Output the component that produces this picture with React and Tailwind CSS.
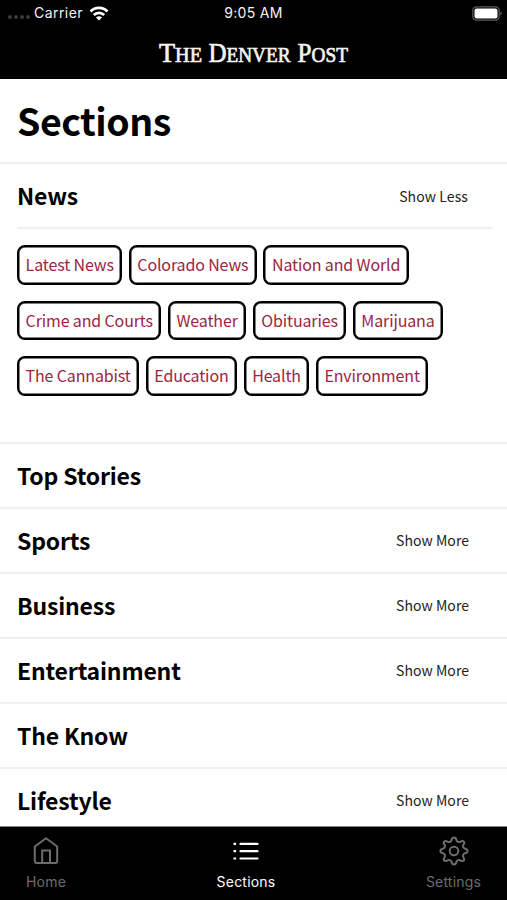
import React, { useState } from 'react';

const TOPICS = [
  ['Latest News', 'Colorado News', 'Nation and World'],
  ['Crime and Courts', 'Weather', 'Obituaries', 'Marijuana'],
  ['The Cannabist', 'Education', 'Health', 'Environment'],
];

const SECTIONS = [
  { name: 'Top Stories' },
  { name: 'Sports', more: true },
  { name: 'Business', more: true },
  { name: 'Entertainment', more: true },
  { name: 'The Know' },
  { name: 'Lifestyle', more: true },
];

const MASTHEAD = [
  { x: 5, w: 43, cap: 'T', rest: 'HE' },
  { x: 54.5, w: 82, cap: 'D', rest: 'ENVER' },
  { x: 143.5, w: 50.5, cap: 'P', rest: 'OST' },
];

const sans = "font-['Noto_Sans_CJK_SC','Noto_Sans',sans-serif]";
const headingCls = 'pb-[2px] text-[23px] leading-[34px] font-bold tracking-[-0.18px] text-black';
const moreCls = 'text-[14px] leading-[20px] text-[#222]';

function StatusBar() {
  return (
    <div className="grid h-[26px] grid-cols-3 items-center pl-2 text-[14px] tracking-[0.3px] text-[#f4f4f4]">
      <div className="flex items-center">
        <div className="mt-2 flex gap-[2px]">
          {[0, 1, 2, 3].map((i) => <span key={i} className="size-1 rounded-full bg-[#3c3c3c]" />)}
        </div>
        <span className="ml-[4px] pb-[2px] tracking-[0.45px]">Carrier</span>
        <svg className="ml-[6px] h-[15px] w-[20px]" viewBox="0 0 20 15" fill="none" stroke="#fff" strokeWidth="2.7">
          <path d="M1.5 5.5a12 12 0 0 1 17 0" />
          <path d="M4.8 9a7.3 7.3 0 0 1 10.4 0" />
          <path d="M7 11.4a4.2 4.2 0 0 1 6 0L10 14.5z" fill="#fff" stroke="none" />
        </svg>
      </div>
      <span className="pr-[8px] pb-[2px] text-center">9:05 AM</span>
      <svg className="mr-[5px] h-[15px] w-[30px] justify-self-end" viewBox="0 0 30 15">
        <rect x=".8" y=".8" width="26.4" height="13.4" rx="4" fill="none" stroke="#5e5e5e" strokeWidth="1.2" />
        <rect x="2.5" y="2.5" width="23" height="10" rx="2.3" fill="#fff" />
        <path d="M28.5 5.5c1.5.8 1.5 3.2 0 4z" fill="#777" />
      </svg>
    </div>
  );
}

function Masthead() {
  return (
    <svg className="mx-auto h-[53px] w-[200px]" viewBox="0 0 200 53" fill="#f4f4f4" stroke="#f4f4f4" strokeWidth=".7">
      {MASTHEAD.map((m) => (
        <text key={m.cap} x={m.x} y="35.5" textLength={m.w} lengthAdjust="spacingAndGlyphs" fontFamily="Liberation Serif, serif" fontSize="28">
          {m.cap}<tspan fontSize="21.5">{m.rest}</tspan>
        </text>
      ))}
    </svg>
  );
}

function HomeIcon() {
  return (
    <svg className="h-[28px] w-[28px]" viewBox="0 0 28 28" fill="none" stroke="currentColor" strokeWidth="2" strokeLinejoin="round">
      <path d="M2.8 9.5 14 1.2l11.2 8.3v14.6a2 2 0 0 1-2 2H4.800a2 2 0 0 1-2-2z" />
      <path d="M10.2 26V13.5h7.8V26" strokeLinejoin="miter" />
    </svg>
  );
}

function ListIcon() {
  return (
    <svg className="h-[28px] w-[28px]" viewBox="0 0 28 28" fill="none" stroke="currentColor" strokeWidth="2.2">
      <path d="M1.5 6.9h2.6M1.5 14.2h2.6M1.5 21.5h2.6" />
      <path d="M8.5 6.9h17M8.5 14.2h17M8.5 21.5h17" strokeLinecap="round" />
    </svg>
  );
}

function GearIcon() {
  return (
    <svg className="h-[30px] w-[30px]" viewBox="0 0 30 30" fill="none" stroke="currentColor" strokeWidth="2" strokeLinejoin="round">
      <circle cx="15" cy="15" r="4.3" />
      <path d="M15 1.4c1.5 0 2 .8 2.4 2.5.5 2 2.3 2.8 4.1 1.7 1.5-.9 2.2-1.2 3.2-.2s.7 1.8-.2 3.2c-1.1 1.8-.3 3.6 1.7 4.1 1.7.4 2.4.9 2.4 2.3s-.7 1.9-2.4 2.3c-2 .5-2.8 2.3-1.7 4.1.9 1.5 1.2 2.2.2 3.2s-1.7.7-3.2-.2c-1.8-1.1-3.6-.3-4.1 1.7-.4 1.7-.9 2.5-2.4 2.5s-2-.8-2.4-2.5c-.5-2-2.3-2.8-4.1-1.7-1.5.9-2.2 1.2-3.2.2s-.7-1.7.2-3.2c1.1-1.8.3-3.6-1.7-4.1-1.7-.4-2.4-.9-2.4-2.3s.7-1.9 2.4-2.3c2-.5 2.8-2.3 1.7-4.1-.9-1.4-1.2-2.2-.2-3.2s1.7-.7 3.2.2c1.8 1.1 3.6.3 4.1-1.7.4-1.7.9-2.5 2.4-2.5z" />
    </svg>
  );
}

function Tab({ icon, label, active, onClick, className }) {
  return (
    <button onClick={onClick} className={`flex flex-col items-center ${active ? 'text-white' : 'text-[#6c6c6c]'} ${className}`}>
      <span className="flex h-[30px] items-center">{icon}</span>
      <span className="mt-[6px] text-[14px] leading-[20px] tracking-[0.2px]">{label}</span>
    </button>
  );
}

export default function App() {
  const [tab, setTab] = useState('Sections');

  return (
    <div className="flex h-screen flex-col overflow-hidden bg-white font-['Inter',sans-serif]">
      <header className="h-[79px] shrink-0 bg-black">
        <StatusBar />
        <Masthead />
      </header>

      <main className={`min-h-0 flex-1 overflow-hidden ${sans}`}>
        <div className="flex h-[85px] items-center border-b-2 border-[#efefef] pl-[17px]">
          <h1 className="pb-[2px] text-[37.5px] leading-[56px] font-bold tracking-[-0.5px] text-black">Sections</h1>
        </div>

        <section className="h-[280px] border-b-2 border-[#f0f0f0] pl-[17px]">
          <div className="mr-[15px] flex h-[65px] items-center justify-between border-b-2 border-[#f0f0f0] pr-[24px]">
            <h2 className={headingCls}>News</h2>
            <button className={`${moreCls} tracking-[0.1px]`}>Show Less</button>
          </div>
          <div className="flex flex-col gap-[16px] pt-[16px]">
            {TOPICS.map((row) => (
              <div key={row[0]} className="flex gap-[6.4px]">
                {row.map((t) => (
                  <a key={t} className="flex h-[39.5px] items-center rounded-[8px] border-2 border-black px-[6.6px] pb-px text-[16px] tracking-[-0.14px] whitespace-nowrap text-[#9d2442] inset-shadow-[0_0_0_0.5px_#000]">{t}</a>
                ))}
              </div>
            ))}
          </div>
        </section>

        {SECTIONS.map((s) => (
          <div key={s.name} className="flex h-[65px] items-center justify-between border-b-2 border-[#f0f0f0] pr-[38px] pl-[17px]">
            <h2 className={headingCls}>{s.name}</h2>
            {s.more && <button className={`${moreCls} pb-px tracking-[0.04px]`}>Show More</button>}
          </div>
        ))}
      </main>

      <nav className="flex h-[74px] shrink-0 justify-between border-t border-[#888] bg-black px-[25px] pt-[9px]">
        <Tab icon={<HomeIcon />} label="Home" active={tab === 'Home'} onClick={() => setTab('Home')} className="w-[42px]" />
        <Tab icon={<ListIcon />} label="Sections" active={tab === 'Sections'} onClick={() => setTab('Sections')} className="w-[60px]" />
        <Tab icon={<GearIcon />} label="Settings" active={tab === 'Settings'} onClick={() => setTab('Settings')} className="w-[57px]" />
      </nav>
    </div>
  );
}
